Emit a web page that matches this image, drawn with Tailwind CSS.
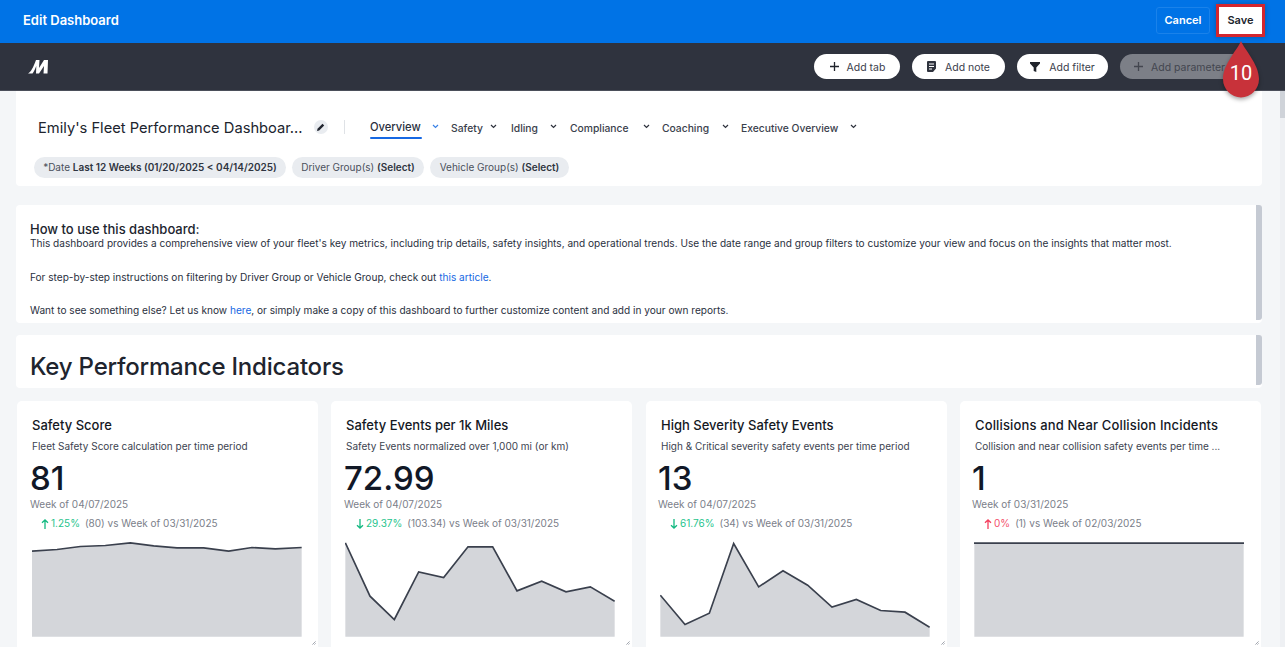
<!DOCTYPE html>
<html><head><meta charset="utf-8"><script src="https://cdn.jsdelivr.net/npm/@tailwindcss/browser@4"></script></head>
<body class="m-0 w-[1285px] h-[647px] overflow-hidden bg-[#f4f6f8] font-['Inter',sans-serif] text-[#1e2430]">
<div class="relative h-[647px] flex flex-col overflow-hidden">
  <header class="h-[43px] shrink-0 bg-[#0073e6] flex items-center pl-[23px] pr-[23px] pb-[2px]">
    <span class="text-[13px] font-semibold text-white">Edit Dashboard</span>
    <div class="ml-auto flex items-center gap-[9px]">
      <button class="w-[54px] h-[27px] rounded-[3px] border border-[#1a82ea] text-[11px] font-semibold text-white">Cancel</button>
      <button class="w-[43px] h-[27px] rounded-none bg-white text-[11px] font-semibold text-[#20242c] outline-3 outline-[#d3262e] shadow-[0_0_5px_3px_rgba(0,0,0,0.25)]">Save</button>
    </div>
  </header>
  <nav class="h-[48px] shrink-0 bg-[#2f333e] flex items-center pl-[28px] border-b border-[#4b4f5a]">
    <svg width="20" height="15" viewBox="0 0 20 15"><path fill="#fff" d="M0 14.500 C3 13 5.500 8 8 1 L11.500 1 L11 9 L16 1 L20 1 L19.500 14.500 L15.500 14.500 L16 7 L11 14.500 L8 14.500 L8.300 7 C7 10 6 13 4.500 14.500 Z"/></svg>
    <div class="ml-auto flex items-center gap-3 mr-[50px] text-[10.500px] leading-[25px]">
      <button class="w-[86px] h-[25px] rounded-full bg-white text-[#3b404c] flex items-center justify-center gap-[7px] font-normal"><svg width="11" height="11" viewBox="0 0 11 11"><path d="M5.500 1v9M1 5.500h9" stroke="#20242c" stroke-width="1.300"/></svg><span class="mt-[1px]">Add tab</span></button>
      <button class="w-[93px] h-[25px] rounded-full bg-white text-[#3b404c] flex items-center justify-center gap-[9px] font-normal"><svg width="9" height="11" viewBox="0 0 9 11"><path fill-rule="evenodd" fill="#2f333e" d="M1 0h7a1 1 0 0 1 1 1v6.500L6 11H1a1 1 0 0 1-1-1V1a1 1 0 0 1 1-1Zm1 2.500v1h5v-1Zm0 2.500v1h5V5Zm0 2.500v1h3v-1Z"/></svg><span class="mt-[1px]">Add note</span></button>
      <button class="w-[91px] h-[25px] rounded-full bg-white text-[#3b404c] flex items-center justify-center gap-[9px] font-normal"><svg width="10" height="10" viewBox="0 0 10 10"><path fill="#20242c" d="M0 0h10v1.500L6.300 5.500V10l-2.600-1V5.500L0 1.500Z"/></svg><span class="mt-[1px]">Add filter</span></button>
      <button class="w-[115px] h-[25px] rounded-l-full bg-[#7c7f87] text-[#43464f] flex items-center gap-[7px] pl-[13px] font-normal whitespace-nowrap"><svg width="11" height="11" viewBox="0 0 11 11"><path d="M5.500 1v9M1 5.500h9" stroke="#43464f" stroke-width="1.300"/></svg><span class="mt-[1px]">Add parameter</span></button>
    </div>
  </nav>
  <div class="flex-1 flex min-h-0">
    <main class="w-[1280px] pl-[16px] pr-[18px] flex flex-col overflow-hidden">
      <section class="h-[95px] shrink-0 bg-white rounded-b-[4px] pl-[18px] pt-[27px]">
        <div class="flex items-center h-[18px]">
          <span class="ml-[4px] mt-[1px] w-[266px] text-[14.700px] leading-[18px] font-normal whitespace-nowrap text-[#20242e]">Emily's Fleet Performance Dashboar...</span>
          <span class="ml-[10px] w-[14px] h-[14px] rounded-full bg-[#e9ecf0] flex items-center justify-center"><svg width="8" height="8" viewBox="0 0 8 8"><path d="M0 8 0.500 5.800 5.500 0.800 7.200 2.500 2.200 7.500Z" fill="#20242e"/></svg></span>
          <span class="ml-[16px] w-px h-[14px] bg-[#dfe2e6]"></span>
          <div class="ml-[25px] flex items-center text-[10.300px] font-medium text-[#3a404c]">
            <span class="relative w-[52px] text-[11.200px] text-[#2a3040] mt-[1px] whitespace-nowrap">Overview<span class="absolute left-0 right-0 top-[18px] h-[2px] rounded bg-[#1668e3]"></span></span>
            <svg class="ml-[10px] mr-[12px] -mt-[2px]" width="7" height="5" viewBox="0 0 7 5"><path d="M1 1l2.500 2.500L6 1" fill="none" stroke="#3b82e6" stroke-width="1.200"/></svg>
            <span class="w-[31px] mt-[4px] whitespace-nowrap">Safety</span>
            <svg class="ml-[8px] mr-[14px] -mt-[2px]" width="7" height="5" viewBox="0 0 7 5"><path d="M1 1l2.500 2.500L6 1" fill="none" stroke="#2f333e" stroke-width="1.200"/></svg>
            <span class="w-[27px] mt-[4px]">Idling</span>
            <svg class="ml-[12px] mr-[13px] -mt-[2px]" width="7" height="5" viewBox="0 0 7 5"><path d="M1 1l2.500 2.500L6 1" fill="none" stroke="#2f333e" stroke-width="1.200"/></svg>
            <span class="w-[61px] mt-[4px]">Compliance</span>
            <svg class="ml-[12px] mr-[12px] -mt-[2px]" width="7" height="5" viewBox="0 0 7 5"><path d="M1 1l2.500 2.500L6 1" fill="none" stroke="#2f333e" stroke-width="1.200"/></svg>
            <span class="w-[48px] mt-[4px]">Coaching</span>
            <svg class="ml-[12px] mr-[12px] -mt-[2px]" width="7" height="5" viewBox="0 0 7 5"><path d="M1 1l2.500 2.500L6 1" fill="none" stroke="#2f333e" stroke-width="1.200"/></svg>
            <span class="w-[97px] mt-[4px] whitespace-nowrap">Executive Overview</span>
            <svg class="ml-[12px] -mt-[2px]" width="7" height="5" viewBox="0 0 7 5"><path d="M1 1l2.500 2.500L6 1" fill="none" stroke="#2f333e" stroke-width="1.200"/></svg>
          </div>
        </div>
        <div class="mt-[21px] flex gap-[6px] text-[10px] text-[#4a505c]">
          <span class="h-[21px] w-[252px] rounded-full bg-[#e9ecf0] flex items-center justify-center whitespace-nowrap">*Date&nbsp;<b class="font-semibold text-[#2f3541]">Last 12 Weeks (01/20/2025 &lt; 04/14/2025)</b></span>
          <span class="h-[21px] w-[132px] rounded-full bg-[#e9ecf0] flex items-center justify-center whitespace-nowrap">Driver Group(s)&nbsp;<b class="font-semibold text-[#2f3541]">(Select)</b></span>
          <span class="h-[21px] w-[139px] rounded-full bg-[#e9ecf0] flex items-center justify-center whitespace-nowrap">Vehicle Group(s)&nbsp;<b class="font-semibold text-[#2f3541]">(Select)</b></span>
        </div>
      </section>

      <section class="relative mt-[19px] h-[118px] shrink-0 bg-white rounded-[4px] pl-[14px] pt-[17px] text-[10.100px] leading-[13px] text-[#2a3040]">
        <h3 class="text-[13px] leading-[15px] font-medium text-[#20242e]">How to use this dashboard:</h3>
        <p class="mt-[0px]">This dashboard provides a comprehensive view of your fleet's key metrics, including trip details, safety insights, and operational trends. Use the date range and group filters to customize your view and focus on the insights that matter most.</p>
        <p class="mt-[21px]">For step-by-step instructions on filtering by Driver Group or Vehicle Group, check out <a class="text-[#1668e3]">this article</a>.</p>
        <p class="mt-[20px]">Want to see something else? Let us know <a class="text-[#1668e3]">here</a>, or simply make a copy of this dashboard to further customize content and add in your own reports.</p>
        <span class="absolute right-0 top-0 bottom-[3px] w-[6px] rounded-r-[3px] bg-[#c5cad3]"></span>
      </section>

      <section class="relative mt-[12px] h-[53px] shrink-0 bg-white rounded-[4px] pl-[14px] pt-[16px]">
        <h2 class="text-[24px] leading-[32px] font-medium text-[#20242e] -tracking-[0.2px] whitespace-nowrap">Key Performance Indicators</h2>
        <span class="absolute right-0 top-0 bottom-[3px] w-[6px] rounded-r-[3px] bg-[#c5cad3]"></span>
      </section>

      <div class="mt-[13px] flex gap-[13px] shrink-0 pl-px">
        <article class="relative w-[301px] h-[260px] shrink-0 bg-white rounded-[5px] pl-[15px] pt-[16px]">
          <h4 class="text-[13px] leading-[17px] font-medium text-[#14181f]">Safety Score</h4>
          <p class="mt-[5px] text-[10px] leading-[14px] text-[#3c4350] whitespace-nowrap">Fleet Safety Score calculation per time period</p>
          <div class="-ml-[2px] mt-[6px] text-[33px] leading-[39px] font-medium text-[#111827]">81</div>
          <div class="-ml-[2px] text-[10px] leading-[13px] text-[#7b808a]">Week of 04/07/2025</div>
          <div class="ml-[9px] mt-[6px] flex items-center text-[10px] leading-[13px] text-[#7b808a]"><svg width="8" height="10" viewBox="0 0 8 10"><path d="M4 10V1M1 3.800 4 1l3 2.800" fill="none" stroke="#13b981" stroke-width="1.300"/></svg><span class="ml-[2px] text-[#1fc48d]">1.25%</span><span class="ml-[5px]">(80) vs Week of 03/31/2025</span></div>
          <svg class="mt-[10px] ml-0" width="270" height="97" viewBox="0 0 810 290"><path fill="#d4d6da" d="M0 33 75 28 145 19 220 16 295 8 365 17 435 23 515 23 590 33 660 22 730 26 809 22V290H0Z"/><path fill="none" stroke="#3a404d" stroke-width="5" d="M0 33 75 28 145 19 220 16 295 8 365 17 435 23 515 23 590 33 660 22 730 26 809 22"/></svg>
          <svg class="absolute left-[295px] top-[240px]" width="4" height="4" viewBox="0 0 5 5"><path d="M0.500 4.500 4.500 0.500M3 4.500 4.500 3" stroke="#6b7280" stroke-width="0.800"/></svg>
        </article>
        <article class="relative w-[301px] h-[260px] shrink-0 bg-white rounded-[5px] pl-[15px] pt-[16px]">
          <h4 class="text-[13px] leading-[17px] font-medium text-[#14181f]">Safety Events per 1k Miles</h4>
          <p class="mt-[5px] text-[10px] leading-[14px] text-[#3c4350] whitespace-nowrap">Safety Events normalized over 1,000 mi (or km)</p>
          <div class="-ml-[2px] mt-[6px] text-[33px] leading-[39px] font-medium text-[#111827]">72.99</div>
          <div class="-ml-[2px] text-[10px] leading-[13px] text-[#7b808a]">Week of 04/07/2025</div>
          <div class="ml-[10px] mt-[6px] flex items-center text-[10px] leading-[13px] text-[#7b808a]"><svg width="8" height="10" viewBox="0 0 8 10"><path d="M4 0V9M1 6.200 4 9l3-2.800" fill="none" stroke="#13b981" stroke-width="1.300"/></svg><span class="ml-[2px] text-[#1fc48d]">29.37%</span><span class="ml-[5px]">(103.34) vs Week of 03/31/2025</span></div>
          <svg class="mt-[10px] -ml-px" width="270" height="97" viewBox="0 0 810 290"><path fill="#d4d6da" d="M1 8 75 168 148 238 221 95 296 112 369 20 443 20 516 152 590 123 663 155 736 140 809 183V290H1Z"/><path fill="none" stroke="#3a404d" stroke-width="5" d="M1 8 75 168 148 238 221 95 296 112 369 20 443 20 516 152 590 123 663 155 736 140 809 183"/></svg>
          <svg class="absolute left-[295px] top-[240px]" width="4" height="4" viewBox="0 0 5 5"><path d="M0.500 4.500 4.500 0.500M3 4.500 4.500 3" stroke="#6b7280" stroke-width="0.800"/></svg>
        </article>
        <article class="relative ml-px w-[301px] h-[260px] shrink-0 bg-white rounded-[5px] pl-[15px] pt-[16px]">
          <h4 class="text-[13px] leading-[17px] font-medium text-[#14181f]">High Severity Safety Events</h4>
          <p class="mt-[5px] text-[10px] leading-[14px] text-[#3c4350] whitespace-nowrap">High &amp; Critical severity safety events per time period</p>
          <div class="-ml-[3px] mt-[6px] text-[33px] leading-[39px] font-medium text-[#111827]">13</div>
          <div class="-ml-[3px] text-[10px] leading-[13px] text-[#7b808a]">Week of 04/07/2025</div>
          <div class="ml-[9px] mt-[6px] flex items-center text-[10px] leading-[13px] text-[#7b808a]"><svg width="8" height="10" viewBox="0 0 8 10"><path d="M4 0V9M1 6.200 4 9l3-2.800" fill="none" stroke="#13b981" stroke-width="1.300"/></svg><span class="ml-[2px] text-[#1fc48d]">61.76%</span><span class="ml-[5px]">(34) vs Week of 03/31/2025</span></div>
          <svg class="mt-[10px] -ml-px" width="270" height="97" viewBox="0 0 810 290"><path fill="#d4d6da" d="M1 165 75 253 148 219 221 10 296 140 369 92 443 135 516 201 589 178 662 211 735 216 809 261V290H1Z"/><path fill="none" stroke="#3a404d" stroke-width="5" d="M1 165 75 253 148 219 221 10 296 140 369 92 443 135 516 201 589 178 662 211 735 216 809 261"/></svg>
          <svg class="absolute left-[295px] top-[240px]" width="4" height="4" viewBox="0 0 5 5"><path d="M0.500 4.500 4.500 0.500M3 4.500 4.500 3" stroke="#6b7280" stroke-width="0.800"/></svg>
        </article>
        <article class="relative w-[301px] h-[260px] shrink-0 bg-white rounded-[5px] pl-[15px] pt-[16px]">
          <h4 class="text-[13px] leading-[17px] font-medium text-[#14181f] whitespace-nowrap tracking-[0.15px]">Collisions and Near Collision Incidents</h4>
          <p class="mt-[5px] text-[10px] leading-[14px] text-[#3c4350] whitespace-nowrap">Collision and near collision safety events per time ...</p>
          <div class="-ml-[3px] mt-[6px] text-[33px] leading-[39px] font-medium text-[#111827]">1</div>
          <div class="-ml-[3px] text-[10px] leading-[13px] text-[#7b808a]">Week of 03/31/2025</div>
          <div class="ml-[9px] mt-[6px] flex items-center text-[10px] leading-[13px] text-[#7b808a]"><svg width="8" height="10" viewBox="0 0 8 10"><path d="M4 10V1M1 3.800 4 1l3 2.800" fill="none" stroke="#f43f5e" stroke-width="1.300"/></svg><span class="ml-[2px] text-[#f4516c]">0%</span><span class="ml-[5px]">(1) vs Week of 02/03/2025</span></div>
          <svg class="mt-[10px] -ml-px" width="270" height="97" viewBox="0 0 810 290"><path fill="#d4d6da" d="M1 9H809V290H1Z"/><path fill="none" stroke="#3a404d" stroke-width="5" d="M0 9H810"/></svg>
          <svg class="absolute left-[295px] top-[240px]" width="4" height="4" viewBox="0 0 5 5"><path d="M0.500 4.500 4.500 0.500M3 4.500 4.500 3" stroke="#6b7280" stroke-width="0.800"/></svg>
        </article>
      </div>
    </main>
    <aside class="w-[5px] bg-[#eef0f3]"><div class="h-[27px] bg-[#cfd3d9]"></div></aside>
  </div>
  <div class="absolute left-[1222px] top-[41px] w-[38px] h-[58px]">
    <svg class="absolute inset-0 drop-shadow-[0_2px_2px_rgba(0,0,0,0.35)]" width="38" height="58" viewBox="0 0 38 58"><path fill="#c8323a" d="M19 0C22 8 37 23 37 38A18 18.500 0 0 1 1 38C1 23 16 8 19 0Z"/></svg>
    <span class="absolute left-0 right-0 top-[20px] text-center text-[20px] leading-[24px] text-white font-['Roboto',sans-serif]">10</span>
  </div>
</div>
</body></html>
